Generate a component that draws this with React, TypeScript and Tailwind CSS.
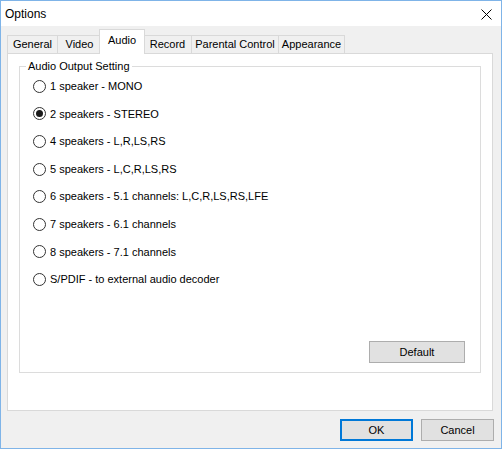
import React, { useState } from 'react';

const tabs = [
  { label: 'General', w: 'w-[50px]' },
  { label: 'Video', w: 'w-[44px]' },
  { label: 'Audio', w: 'w-[40px]' },
  { label: 'Record', w: 'w-[48px]' },
  { label: 'Parental Control', w: 'w-[87px]' },
  { label: 'Appearance', w: 'w-[67px]' },
];

const options = [
  '1 speaker - MONO',
  '2 speakers - STEREO',
  '4 speakers - L,R,LS,RS',
  '5 speakers - L,C,R,LS,RS',
  '6 speakers - 5.1 channels: L,C,R,LS,RS,LFE',
  '7 speakers - 6.1 channels',
  '8 speakers - 7.1 channels',
  'S/PDIF - to external audio decoder',
];

const Radio: React.FC<{ checked: boolean }> = ({ checked }) => (
  <span className="w-[13px] h-[13px] rounded-full border border-[#333333] bg-white flex items-center justify-center shrink-0">
    {checked && <span className="w-[7px] h-[7px] rounded-full bg-[#1a1a1a]" />}
  </span>
);

export default function App() {
  const [tab, setTab] = useState('Audio');
  const [speakers, setSpeakers] = useState(1);

  return (
    <div
      className="w-[502px] h-[449px] border border-[#7fb4e8] bg-[#f0f0f0] flex flex-col text-[11px] text-black overflow-hidden"
      style={{ fontFamily: '"Liberation Sans", Arial, sans-serif' }}
    >
      {/* title bar */}
      <div className="h-[25px] bg-white flex items-center justify-between pl-[4px] pr-[9px] shrink-0">
        <span className="text-[12px] pt-[1px]">Options</span>
        <svg width="11" height="11" viewBox="0 0 11 11" className="mt-[1px]">
          <path d="M0.5 0.5L10.5 10.5M10.5 0.5L0.5 10.5" stroke="#000" strokeWidth="1" />
        </svg>
      </div>

      <div className="flex-1 flex flex-col px-[6px] pt-[7px]">
        {/* tabs */}
        <div className="flex items-end h-[20px] relative z-10">
          {tabs.map((t, i) => {
            const active = t.label === tab;
            return (
              <button
                key={t.label}
                onClick={() => setTab(t.label)}
                className={`${t.w} flex items-center justify-center border-[#d9d9d9] ${
                  active
                    ? 'h-[21px] -mx-[2px] border-l border-r border-t bg-white relative z-10 mb-[-1px] pb-[3px] px-[2px] box-content'
                    : `h-[18px] border-t border-l bg-[#f0f0f0] ${i === tabs.length - 1 ? 'border-r' : ''}`
                }`}
              >
                {t.label}
              </button>
            );
          })}
        </div>

        {/* tab panel */}
        <div className="h-[358px] w-[486px] bg-white border border-[#d9d9d9] px-[11px] pt-[4px]">
          <fieldset className="h-[315px] border border-[#dcdcdc] flex flex-col">
            <legend className="ml-[6px] px-[2px]">Audio Output Setting</legend>
            <div className="flex flex-col pl-[13px] -mt-[2px]">
              {options.map((o, i) => (
                <label
                  key={o}
                  onClick={() => setSpeakers(i)}
                  className="h-[27.6px] flex items-center gap-[4px] cursor-default"
                >
                  <Radio checked={speakers === i} />
                  <span>{o}</span>
                </label>
              ))}
            </div>
            <div className="mt-auto flex justify-end pr-[15px] pb-[9px]">
              <button className="w-[96px] h-[22px] bg-[#e1e1e1] border border-[#adadad]">Default</button>
            </div>
          </fieldset>
        </div>

        {/* dialog buttons */}
        <div className="flex justify-end gap-[8px] pt-[8px] pr-[1px]">
          <button className="w-[73px] h-[22px] bg-[#e1e1e1] border-2 border-[#0078d7]">OK</button>
          <button className="w-[73px] h-[22px] bg-[#e1e1e1] border border-[#adadad]">Cancel</button>
        </div>
      </div>
    </div>
  );
}
